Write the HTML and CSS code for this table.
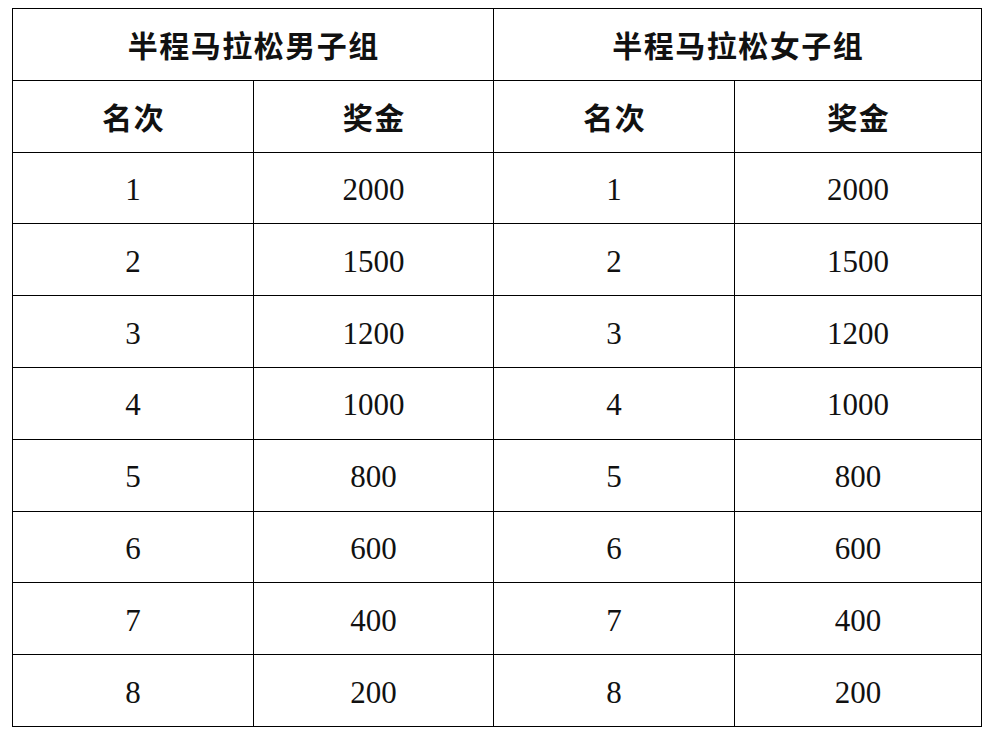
FILE: index.html
```html
<!DOCTYPE html>
<html lang="zh-CN">
<head>
<meta charset="utf-8">
<title>半程马拉松奖金</title>
<link rel="stylesheet" href="styles.css">
</head>
<body>
<table class="prize">
  <colgroup>
    <col class="c1"><col class="c2"><col class="c3"><col class="c4">
  </colgroup>
  <thead>
    <tr class="group"><th colspan="2">半程马拉松男子组</th><th colspan="2">半程马拉松女子组</th></tr>
    <tr class="sub"><th>名次</th><th>奖金</th><th>名次</th><th>奖金</th></tr>
  </thead>
  <tbody>
    <tr><td>1</td><td>2000</td><td>1</td><td>2000</td></tr>
    <tr><td>2</td><td>1500</td><td>2</td><td>1500</td></tr>
    <tr><td>3</td><td>1200</td><td>3</td><td>1200</td></tr>
    <tr><td>4</td><td>1000</td><td>4</td><td>1000</td></tr>
    <tr><td>5</td><td>800</td><td>5</td><td>800</td></tr>
    <tr><td>6</td><td>600</td><td>6</td><td>600</td></tr>
    <tr><td>7</td><td>400</td><td>7</td><td>400</td></tr>
    <tr><td>8</td><td>200</td><td>8</td><td>200</td></tr>
  </tbody>
</table>
</body>
</html>
```

FILE: styles.css
```css
html, body {
  background: #ffffff;
}
body {
  margin: 8px 0 0 12px;
  font-family: "Liberation Serif", "Noto Sans CJK SC", serif;
  color: #111111;
}
.prize {
  border-collapse: collapse;
  table-layout: fixed;
  width: 969px;
}
.c1 { width: 241px; }
.c2 { width: 240px; }
.c3 { width: 241px; }
.c4 { width: 247px; }
.prize th,
.prize td {
  border: 1px solid #000000;
  padding: 0;
  text-align: center;
  vertical-align: middle;
}
.prize tr {
  height: 71.8px;
}
.prize th {
  font-family: "Noto Sans CJK SC", serif;
  font-weight: 700;
  font-size: 30px;
  letter-spacing: 1.5px;
  padding-left: 1.5px;
}
.prize td {
  font-size: 31px;
  font-weight: 400;
  padding-top: 4px;
}
```
